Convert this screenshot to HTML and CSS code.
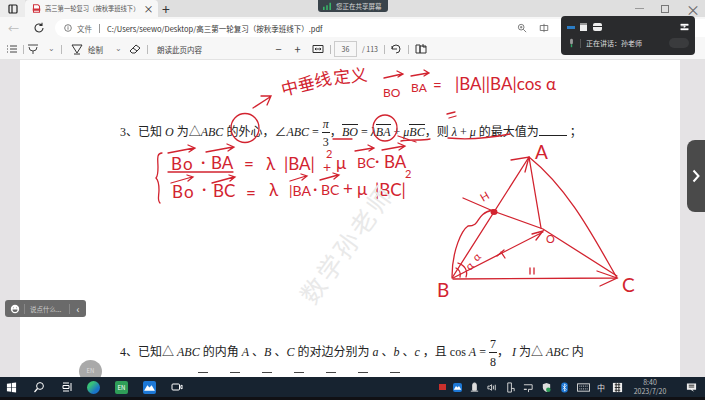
FILE: index.html
```html
<!DOCTYPE html>
<html lang="zh-CN">
<head>
    <meta charset="UTF-8">
    <title>高三第一轮复习</title>
    <link rel="stylesheet" href="styles.css">
</head>
<body>
    <!-- Tabs -->
    <div class="tabbar">
        <div class="tab-side">
            <svg class="icon" viewBox="0 0 12 12"><rect x="2" y="2" width="8" height="8" rx="1" fill="none" stroke="#222" stroke-width="1.2"/><path d="M5 2v8" stroke="#222" stroke-width="1.2"/></svg>
        </div>
        <div class="tab">
            <svg class="icon" viewBox="0 0 12 12"><path d="M2 1h6l2 2v8H2z" fill="#fff" stroke="#d0323c" stroke-width="1.4"/><rect x="1" y="6" width="10" height="3" fill="#d0323c"/></svg>
            <span class="tab-title">高三第一轮复习（按秋季班线下）</span>
            <span class="tab-close">×</span>
        </div>
        <span class="tab-new">+</span>
        <div class="win-controls">
            <span class="win-min"></span>
            <span class="win-max"></span>
            <span class="win-close">×</span>
        </div>
    </div>

    <!-- Address -->
    <div class="addressbar">
        <span class="back">←</span>
        <svg class="icon refresh" viewBox="0 0 12 12"><path d="M10 6a4 4 0 1 1-1.300-3M9 .8v2.600H6.400" fill="none" stroke="#333" stroke-width="1.100"/></svg>
        <div class="url">
            <svg class="icon" viewBox="0 0 12 12"><circle cx="6" cy="6" r="4" fill="none" stroke="#666"/><path d="M6 5v3M6 3.400v1" stroke="#666"/></svg>
            <span class="url-scheme">文件</span>
            <span class="url-sep"></span>
            <span class="url-path">C:/Users/seewo/Desktop/高三第一轮复习（按秋季班线下）.pdf</span>
            <svg class="icon url-zoom" viewBox="0 0 12 12"><circle cx="5" cy="5" r="3.400" fill="none" stroke="#666"/><path d="M7.500 7.500 11 11M3.500 5h3M5 3.500v3" stroke="#666"/></svg>
            <svg class="icon url-read" viewBox="0 0 12 12"><path d="M1.500 3h9v6h-9zM6 1v10" fill="none" stroke="#666"/></svg>
        </div>
    </div>

    <!-- PDF toolbar -->
    <div class="toolbar">
        <svg class="icon" viewBox="0 0 12 12"><path d="M1 3h1M4 3h7M1 6h1M4 6h7M1 9h1M4 9h7" stroke="#444"/></svg>
        <span class="tool-sep ml-5"></span>
        <svg class="icon ml-3" viewBox="0 0 12 12"><path d="M1 2h10M2 4a4 4 0 0 0 8 0M6 8v3" fill="none" stroke="#444"/></svg>
        <span class="chev ml-9">⌄</span>
        <span class="tool-sep ml-7"></span>
        <svg class="icon ml-9" viewBox="0 0 12 12"><path d="M1 2h10L6 10zM3 11h6" fill="none" stroke="#333"/></svg>
        <span class="tool-label ml-5">绘制</span>
        <span class="chev ml-12">⌄</span>
        <svg class="icon ml-8" viewBox="0 0 12 12"><path d="M1 8 7 2l4 3-5 5H3zM4 5l4 3" fill="none" stroke="#333"/></svg>
        <span class="tool-sep ml-6"></span>
        <span class="tool-label ml-9">朗读此页内容</span>
        <span class="tool-btn ml-70">−</span>
        <span class="tool-btn ml-6">+</span>
        <svg class="icon ml-8" viewBox="0 0 12 12"><path d="M1 2.500h10v7H1zM3 6h6M3 6l1.200-1.200M3 6l1.200 1.200M9 6 7.800 4.800M9 6 7.800 7.200" fill="none" stroke="#333"/></svg>
        <span class="tool-sep ml-6"></span>
        <span class="page-box ml-3">36</span>
        <span class="page-total ml-5">/ 113</span>
        <span class="tool-sep ml-3"></span>
        <svg class="icon ml-5" viewBox="0 0 12 12"><path d="M2 6a4 4 0 1 1 4 4M2 3v3h3M6 5v2" fill="none" stroke="#333"/></svg>
        <span class="tool-sep ml-6"></span>
        <svg class="icon ml-6" viewBox="0 0 12 12"><path d="M1 2h4v8H1zM5 3h6v7H5zM8 1v3h3" fill="none" stroke="#333"/></svg>
    </div>

    <!-- Document -->
    <div class="viewer">
        <div class="sheet">
            <p class="problem problem-3">3、已知 <i>O</i> 为△<i>ABC</i> 的外心，∠<i>ABC</i> = <span class="frac"><i>π</i><span>3</span></span>，<i class="vec">BO</i> = <i>λ</i><i class="vec">BA</i> + <i>μ</i><i class="vec">BC</i>，则 <i>λ</i> + <i>μ</i> 的最大值为<span class="blank"></span> ；</p>
            <p class="problem problem-4">4、已知△ <i>ABC</i> 的内角 <i>A</i> 、<i>B</i> 、<i>C</i> 的对边分别为 <i>a</i> 、<i>b</i> 、<i>c</i> ，且 cos <i>A</i> = <span class="frac"><span>7</span><span>8</span></span>， <i>I</i> 为△ <i>ABC</i> 内</p>
            <div class="cut-line">
                <span></span><span></span><span></span><span></span><span></span><span></span><span></span>
            </div>
        </div>
    </div>

    <!-- Taskbar -->
    <div class="taskbar">
        <svg class="icon task-win" viewBox="0 0 12 12"><path d="M1 2l4.500-.7v4.300H1zM6.300 1.200 11 .5v5.100H6.300zM1 6.400h4.500v4.300L1 10zM6.300 6.400H11v5.100l-4.700-.7z" fill="#fff"/></svg>
        <svg class="icon" viewBox="0 0 12 12"><circle cx="7" cy="5" r="3.400" fill="none" stroke="#fff"/><path d="M4.500 7.500 1.500 11" stroke="#fff" stroke-width="1.200"/></svg>
        <svg class="icon" viewBox="0 0 12 12"><path d="M2 2h6M2 10h6M2 4.500h6v3H2zM10 2v8" fill="none" stroke="#fff"/></svg>
        <span class="app app-edge"></span>
        <span class="app app-en">EN</span>
        <span class="app app-blue"><svg viewBox="0 0 12 12"><path d="M1 9 4 4l2 2 2-2 3 5z" fill="#fff"/></svg></span>
        <svg class="icon" viewBox="0 0 12 12"><rect x="1" y="3" width="7.500" height="6" rx="1" fill="none" stroke="#fff"/><path d="M9 5.500 11 4v4L9 6.500" fill="none" stroke="#fff"/></svg>
        <div class="tray">
            <span class="tray-rec"></span>
            <span class="app-blue tray-blue"><svg viewBox="0 0 12 12"><path d="M1 9 4 4l2 2 2-2 3 5z" fill="#fff"/></svg></span>
            <svg class="icon" viewBox="0 0 12 12"><path d="M4 9V3a2 2 0 0 1 4 0v6zM2 10h8" fill="#ddd" stroke="#ddd"/></svg>
            <svg class="icon" viewBox="0 0 12 12"><path d="M1 4.500h2L5 3v6L3 7.500H1zM7 4v4M9 3v6" fill="none" stroke="#ddd"/></svg>
            <svg class="icon" viewBox="0 0 12 12"><path d="M3 1h4v10H3zM7 7h3v3" fill="none" stroke="#ddd"/></svg>
            <svg class="icon" viewBox="0 0 12 12"><path d="M1 3h9v5H6v3M4 8H1z" fill="none" stroke="#ddd"/></svg>
            <svg class="icon" viewBox="0 0 12 12"><path d="M6 1l4 1.500V6c0 2.500-2 4-4 5-2-1-4-2.500-4-5V2.500z" fill="#ddd"/><circle cx="8" cy="8.500" r="2.500" fill="#2c9a55"/></svg>
            <svg class="icon" viewBox="0 0 12 12"><rect x="2.500" y="0.500" width="7" height="11" rx="3" fill="#1d78d6"/><path d="M4 4l4 4-2 2V2l2 2-4 4" fill="none" stroke="#fff" stroke-width=".7"/></svg>
            <svg class="icon tray-kbd" viewBox="0 0 14 12"><rect x=".5" y="2" width="13" height="8" fill="none" stroke="#ddd"/><path d="M2.500 4.500h9M2.500 7.500h9" stroke="#ddd" stroke-dasharray="1 1"/></svg>
            <span class="tray-ime">中</span>
            <svg class="icon" viewBox="0 0 12 12"><rect x="1" y="1" width="10" height="10" fill="#eee"/><path d="M3 3h6M3 6h6M3 9h6M4.500 1v10M7.500 1v10" stroke="#222"/></svg>
            <div class="clock"><span>8:40</span><span>2023/7/20</span></div>
            <svg class="icon tray-notify" viewBox="0 0 12 12"><path d="M1 1.500h10v7H7l2 2-4-2H1z" fill="#eee"/><path d="M3 3.500h6M3 5.500h6" stroke="#222"/></svg>
        </div>
    </div>

    <!-- Teacher's ink over the page -->
    <svg class="ink" viewBox="0 0 705 400">
        <g class="ink-text">
            <text x="283" y="96" transform="rotate(-14 283 96)" class="ink-cn">中垂线</text>
            <text x="334" y="84" transform="rotate(-6 334 84)" class="ink-cn">定义</text>
            <text x="383" y="97" class="ink-m">BO</text>
            <text x="411" y="92" class="ink-m">BA</text>
            <text x="433" y="91" class="ink-h">=</text>
            <text x="455" y="90" class="ink-f">|BA||BA|cos α</text>

            <text x="171" y="170" class="ink-f">B<tspan dx="1">o</tspan></text>
            <text x="201" y="168" class="ink-f">·</text>
            <text x="211" y="169" class="ink-f">BA</text>
            <text x="244" y="170" class="ink-f">=</text>
            <text x="266" y="170" class="ink-f">λ</text>
            <text x="284" y="170" class="ink-f">|BA|</text>
            <text x="326" y="158" class="ink-s">2</text>
            <text x="323" y="172" class="ink-s2">+</text>
            <text x="336" y="169" class="ink-f">μ</text>
            <text x="357" y="168" class="ink-s2">BC</text>
            <text x="375" y="167" class="ink-f">·</text>
            <text x="384" y="168" class="ink-f">BA</text>

            <text x="172" y="198" class="ink-f">B<tspan dx="1">o</tspan></text>
            <text x="202" y="195" class="ink-f">·</text>
            <text x="213" y="197" class="ink-f">BC</text>
            <text x="246" y="199" class="ink-f">=</text>
            <text x="269" y="196" class="ink-f">λ</text>
            <text x="289" y="196" class="ink-s2">|BA</text>
            <text x="313" y="195" class="ink-f">·</text>
            <text x="321" y="195" class="ink-s2">BC</text>
            <text x="343" y="195" class="ink-f">+</text>
            <text x="357" y="195" class="ink-f">μ</text>
            <text x="375" y="196" class="ink-f">|BC|</text>
            <text x="405" y="178" class="ink-s">2</text>

            <text x="535" y="159" class="ink-l">A</text>
            <text x="437" y="297" class="ink-l">B</text>
            <text x="622" y="292" class="ink-l">C</text>
            <text x="483" y="202" transform="rotate(-30 483 202)" class="ink-s">H</text>
            <text x="546" y="243" class="ink-s">O</text>
            <text x="470" y="271" transform="rotate(-45 470 271)" class="ink-s">α</text>
            <text x="477" y="262" transform="rotate(-45 477 262)" class="ink-s">α</text>
        </g>
        <g class="ink-line">
            <!-- circles and the arrow from the first one -->
            <ellipse cx="245" cy="128" rx="14" ry="14.500"/>
            <ellipse cx="385" cy="128" rx="12" ry="13"/>
            <path d="M253 108 270 97M261 96l10 0-4 9"/>
            <path d="M333 139h19M401 141c10-2 20 0 29-2M398 136l18 6M448 138c20 2 42 0 62-4M447 114l8-2M449 118l7-2"/>

            <!-- vector arrows -->
            <path d="M384 78 402 74M397 71l6 3-5 3M411 76 428 73M424 70l5 3-5 3"/>
            <path d="M168 153 194 148M188 145l7 3-6 4M206 152 233 147M227 144l7 3-6 4M355 151 373 148M368 145l6 3-5 3M382 150 404 146M398 143l7 3-6 4"/>
            <path d="M171 183 192 177M187 175l6 2-5 4M212 183 234 177M229 175l6 2-5 4M290 181 306 176M301 174l6 2-5 4M320 180 338 175M333 173l6 2-5 4"/>

            <!-- system brace and division -->
            <path d="M162 153c-6 0-4 8-4 14 0 6-1 10-2 11 2 2 3 6 3 12 0 6-2 10 1 13M168 172 233 172"/>

            <!-- triangle -->
            <path d="M452 278 529 157 M529 157C570 190 595 240 617 278 M529 157 541 228M453 279 617 278"/>
            <path d="M463 198 493 211 543 229 617 276"/>
            <path d="M453 278 543 232M532 234l11-3-7 9M511 160l18-3-4 15M597 271l20 7-17 8"/>
            <path d="M452 277C452 250 462 230 468 226 482 226 474 214 493 210"/>
            <path d="M466 277c2-6-1-12-8-14M460 277c1-4 0-7-4-9"/>
            <path d="M497 256 504 250M505 258 501 252M530 268v6M534 268v6"/>
        </g>
        <ellipse cx="494" cy="212" rx="3.500" ry="3" class="ink-blot"/>
    </svg>

    <div class="watermark">数学孙老师</div>

    <!-- Overlays -->
    <div class="share-tag">
        <svg class="bars" viewBox="0 0 12 10"><path d="M1 6h2v4H1zM5 4h2v6H5zM9 1h2v9H9z" fill="#38b468"/></svg>
        <span>您正在共享屏幕</span>
    </div>

    <div class="meeting">
        <div class="meeting-views">
            <span class="view-a"></span>
            <span class="view-b"></span>
            <span class="view-c"></span>
            <svg class="view-exit" viewBox="0 0 12 12"><path d="M1 2h10v2H1zM1 8h10v2H1zM1 5h6M5 4l2.500 1.500L5 7" fill="#fff" stroke="#fff" stroke-width=".5"/></svg>
        </div>
        <div class="meeting-talk">
            <svg class="mic" viewBox="0 0 10 14"><rect x="3" y="1" width="4" height="8" rx="2" fill="#999"/><path d="M5 9v4" stroke="#2fa866" stroke-width="2"/></svg>
            <span class="talk-sep"></span>
            <span>正在讲话：孙老师</span>
            <span class="talk-face"></span>
        </div>
    </div>

    <div class="chat-pill">
        <svg class="chat-face" viewBox="0 0 12 12"><circle cx="6" cy="6" r="5" fill="#fff"/><path d="M3 6.500h6a3 3 0 0 1-6 0z" fill="#666"/><path d="M4 4.500h.8M7.200 4.500H8" stroke="#666"/></svg>
        <span class="chat-text">说点什么...</span>
        <span class="chat-arrow">‹</span>
    </div>

    <div class="side-handle">
        <svg viewBox="0 0 8 14"><path d="M1.500 1.500 6.500 7l-5 5.500" fill="none" stroke="#fff" stroke-width="2"/></svg>
    </div>

    <div class="float-dot"><span>EN</span></div>
</body>
</html>
```

FILE: styles.css
```css
* {
    margin: 0;
    padding: 0;
    box-sizing: border-box;
}

html, body {
    width: 705px;
    height: 400px;
    overflow: hidden;
}

body {
    position: relative;
    display: flex;
    flex-direction: column;
    background-color: #f7f7f7;
    color: #333;
    font-family: "Noto Sans CJK SC", "Liberation Sans", sans-serif;
    font-size: 7px;
}

.icon {
    flex: none;
    width: 12px;
    height: 12px;
}

.ml-3 { margin-left: 3px; }
.ml-5 { margin-left: 5px; }
.ml-6 { margin-left: 6px; }
.ml-7 { margin-left: 7px; }
.ml-8 { margin-left: 8px; }
.ml-9 { margin-left: 9px; }
.ml-12 { margin-left: 12px; }
.ml-70 { margin-left: 70px; }

/* Tabs */
.tabbar {
    display: flex;
    align-items: center;
    height: 17px;
    background-color: #dfdfdf;
}

.tab-side {
    display: flex;
    justify-content: center;
    width: 25px;
    height: 17px;
    align-items: center;
    background-color: #ececec;
}

.tab {
    display: flex;
    align-items: center;
    gap: 4px;
    width: 133px;
    height: 17px;
    padding: 0 5px 0 7px;
    background-color: #f7f7f7;
    border-radius: 4px 4px 0 0;
}

.tab .icon {
    width: 9px;
    height: 9px;
}

.tab-title {
    width: 97px;
    color: #555;
    font-size: 6.300px;
    white-space: nowrap;
}

.tab-close {
    font-size: 10px;
    line-height: 1;
}

.tab-new {
    margin-left: 4px;
    font-size: 14px;
    line-height: 1;
    color: #333;
}

.win-controls {
    display: flex;
    align-items: center;
    gap: 17px;
    margin-left: auto;
    padding-right: 5px;
}

.win-min {
    width: 9px;
    border-top: 1px solid #999;
}

.win-max {
    width: 8px;
    height: 8px;
    border: 1px solid #777;
}

.win-close {
    font-size: 14px;
    line-height: 1;
    color: #666;
}

/* Address */
.addressbar {
    display: flex;
    align-items: center;
    height: 22px;
    padding-left: 8px;
}

.back {
    width: 12px;
    font-size: 11px;
    color: #bbb;
}

.refresh {
    margin-left: 13px;
}

.url {
    display: flex;
    align-items: center;
    flex: 1;
    height: 18px;
    margin-left: 10px;
    padding-left: 8px;
    background-color: #fff;
    border-radius: 9px 0 0 9px;
}

.url .icon {
    width: 10px;
    height: 10px;
}

.url-scheme {
    margin-left: 4px;
    color: #666;
    font-size: 7.500px;
}

.url-sep {
    height: 9px;
    margin: 0 7px;
    border-left: 1px solid #999;
}

.url-path {
    width: 410px;
    color: #333;
    font-size: 7.500px;
    white-space: nowrap;
}

.url-read {
    margin-left: 12px;
}

/* PDF toolbar */
.toolbar {
    display: flex;
    align-items: center;
    height: 21px;
    padding-left: 6px;
    border-bottom: 1px solid #e3e3e3;
}

.tool-sep {
    height: 9px;
    border-left: 1px solid #bbb;
}

.chev {
    width: 6px;
    margin-top: -4px;
    color: #777;
    font-size: 8px;
}

.tool-label {
    color: #444;
    font-size: 7.500px;
    white-space: nowrap;
}

.tool-btn {
    width: 13px;
    color: #444;
    font-size: 11px;
    text-align: center;
}

.page-box {
    width: 23px;
    height: 16px;
    border: 1px solid #ccc;
    color: #555;
    line-height: 14px;
    text-align: center;
}

.page-total {
    width: 19px;
    color: #555;
    font-size: 7px;
    white-space: nowrap;
}

/* Document */
.viewer {
    flex: 1;
    min-height: 0;
    padding: 0 25px 0 20px;
    overflow: hidden;
    background-color: #e5e3e5;
}

.sheet {
    height: 100%;
    padding-left: 100px;
    overflow: hidden;
    background-color: #fff;
    font-family: "Liberation Serif", "Noto Sans CJK SC", serif;
    color: #222;
    font-size: 12px;
    line-height: 16px;
}

.problem {
    white-space: nowrap;
}

.problem-3 {
    margin-top: 56px;
}

.problem-4 {
    margin-top: 186px;
}

.frac {
    display: inline-flex;
    flex-direction: column;
    align-items: center;
    vertical-align: middle;
    line-height: 16px;
}

.frac > :first-child {
    padding: 0 1px;
    border-bottom: 1px solid #222;
}

.frac > :last-child {
    margin-top: 1px;
}

.vec {
    border-top: 1px solid #222;
}

.blank {
    display: inline-block;
    width: 28px;
    border-bottom: 1px solid #222;
}

.cut-line {
    display: flex;
    gap: 22px;
    margin: 2px 0 0 78px;
}

.cut-line span {
    width: 10px;
    height: 3px;
    border-top: 1px solid #444;
}

/* Taskbar */
.taskbar {
    display: flex;
    align-items: center;
    gap: 15px;
    height: 23px;
    padding: 0 6px;
    background-color: #172330;
    border-bottom: 3px solid #101014;
}

.task-win {
    width: 11px;
    height: 11px;
}

.taskbar > .icon {
    margin-right: 1px;
}

.app {
    flex: none;
    width: 13px;
    height: 13px;
}

.app-edge {
    margin-left: -2px;
    border-radius: 50%;
    background: linear-gradient(135deg, #38c07a 30%, #1a74c8 70%);
}

.app-en {
    border-radius: 2px;
    background-color: #2f9e58;
    color: #fff;
    font-size: 6px;
    line-height: 13px;
    text-align: center;
}

.app-blue {
    display: flex;
    background-color: #1d78d6;
    border-radius: 2px;
}

.tray {
    display: flex;
    align-items: center;
    gap: 7px;
    margin-left: auto;
}

.tray .icon {
    width: 11px;
    height: 11px;
}

.tray-rec {
    width: 7px;
    height: 6px;
    background-color: #c9302c;
}

.tray-blue {
    width: 9px;
    height: 9px;
}

.tray .tray-kbd {
    width: 13px;
}

.tray-ime {
    color: #ddd;
    font-size: 8px;
}

.clock {
    display: flex;
    flex-direction: column;
    align-items: center;
    width: 36px;
    margin-left: 2px;
    color: #bbb;
    font-size: 7px;
    line-height: 9px;
}

.tray .tray-notify {
    margin: 0 2px 0 11px;
}

/* Ink */
.ink {
    position: absolute;
    top: 0;
    left: 0;
    width: 705px;
    height: 400px;
}

.ink-text text {
    fill: #d2232f;
    font-family: "Lato", "Liberation Sans", "Noto Sans CJK SC", sans-serif;
}

.ink-cn {
    font-size: 17px;
}

.ink-m {
    font-size: 12px;
}

.ink-h {
    font-size: 15px;
}

.ink-f {
    font-size: 17px;
}

.ink-s {
    font-size: 11px;
}

.ink-s2 {
    font-size: 14px;
}

.ink-l {
    font-size: 19px;
}

.ink-line {
    fill: none;
    stroke: #d2232f;
    stroke-width: 1.300;
    stroke-linecap: round;
}

.ink-blot {
    fill: #d2232f;
}

.watermark {
    position: absolute;
    top: 230px;
    left: 276px;
    width: 140px;
    color: #e9e9e9;
    font-size: 25px;
    letter-spacing: 3px;
    line-height: 26px;
    white-space: nowrap;
    transform: rotate(-54deg);
}

/* Overlays */
.share-tag {
    position: absolute;
    top: 0;
    left: 318px;
    display: flex;
    align-items: center;
    gap: 4px;
    width: 70px;
    height: 12px;
    padding-left: 4px;
    background-color: #39434a;
    border-radius: 0 0 3px 3px;
    color: #d5d5d5;
    font-size: 6.500px;
    white-space: nowrap;
}

.bars {
    width: 10px;
    height: 8px;
}

.meeting {
    position: absolute;
    top: 16px;
    left: 561px;
    width: 134px;
    height: 39px;
    padding: 5px 6px;
    background-color: #2a2b2d;
    border-radius: 4px;
    color: #ddd;
    font-size: 7px;
}

.meeting-views {
    display: flex;
    align-items: center;
    gap: 5px;
    height: 12px;
}

.view-a {
    width: 8px;
    height: 3px;
    background-color: #2b7cc4;
}

.view-b {
    width: 7px;
    height: 8px;
    background-color: #eee;
    border-top: 2px solid #999;
}

.view-c {
    width: 9px;
    height: 8px;
    margin-left: 1px;
    background: linear-gradient(#eee 40%, #2a2b2d 40% 55%, #eee 55%);
    border-radius: 2px;
}

.view-exit {
    width: 9px;
    height: 10px;
    margin-left: auto;
}

.meeting-talk {
    display: flex;
    align-items: center;
    gap: 4px;
    margin-top: 5px;
    white-space: nowrap;
}

.mic {
    width: 7px;
    height: 10px;
    margin-left: 1px;
}

.talk-sep {
    height: 9px;
    margin: 0 1px;
    border-left: 1px solid #555;
}

.talk-face {
    width: 20px;
    height: 10px;
    margin-left: auto;
    background-color: #3a3b3d;
    border-radius: 5px;
}

.chat-pill {
    position: absolute;
    top: 300px;
    left: 5px;
    display: flex;
    align-items: center;
    width: 81px;
    height: 17px;
    padding-left: 5px;
    background-color: #6a6a6a;
    border-radius: 3px;
    color: #ccc;
    font-size: 6.500px;
}

.chat-face {
    width: 10px;
    height: 10px;
}

.chat-text {
    flex: 1;
    margin-left: 4px;
    padding-left: 5px;
    border-left: 1px solid #888;
    line-height: 10px;
}

.chat-arrow {
    width: 17px;
    border-left: 1px solid #888;
    color: #eee;
    font-size: 10px;
    line-height: 10px;
    text-align: center;
}

.side-handle {
    position: absolute;
    top: 140px;
    left: 687px;
    display: flex;
    align-items: center;
    justify-content: center;
    width: 18px;
    height: 72px;
    background-color: #4a4a4a;
    border-radius: 8px 0 0 8px;
}

.side-handle svg {
    width: 8px;
    height: 14px;
}

.float-dot {
    position: absolute;
    top: 360px;
    left: 79px;
    width: 23px;
    height: 17px;
    overflow: hidden;
}

.float-dot span {
    display: block;
    width: 23px;
    height: 23px;
    padding-top: 6px;
    background-color: #a9a9a9;
    border-radius: 50%;
    color: #ddd;
    font-size: 6px;
    text-align: center;
}
```
